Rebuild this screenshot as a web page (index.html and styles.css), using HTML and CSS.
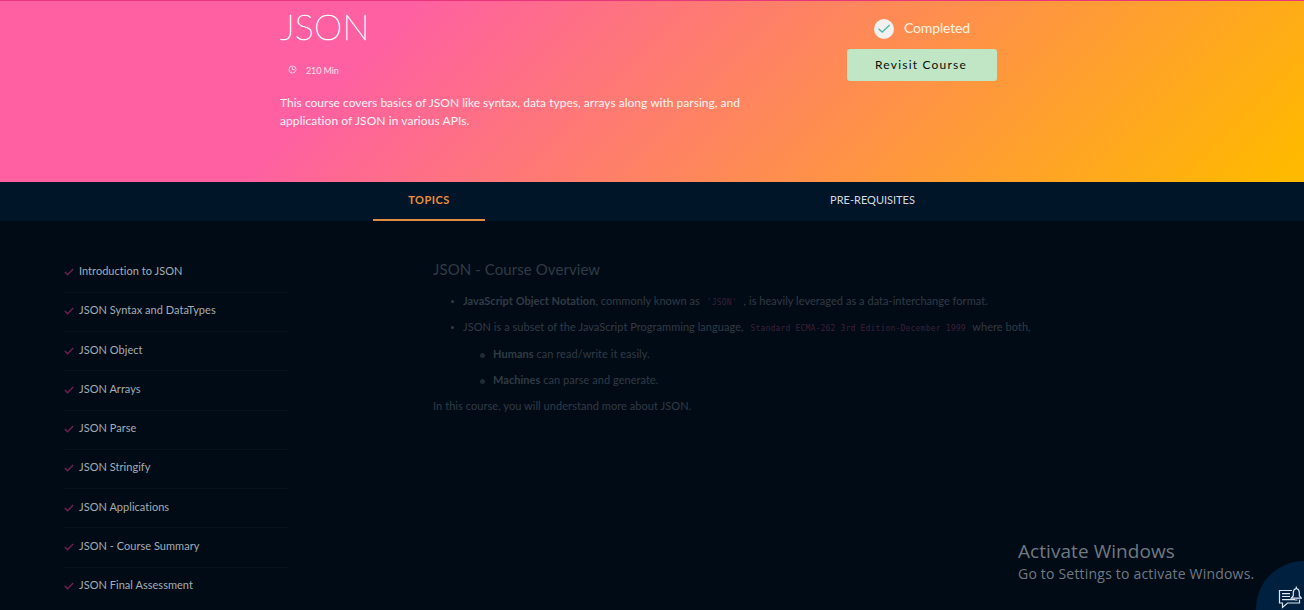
FILE: index.html
```html
<!DOCTYPE html>
<html lang="en">
<head>
<meta charset="utf-8">
<title>JSON</title>
<link rel="stylesheet" href="styles.css">
</head>
<body>
<header class="hero">
  <div class="intro">
    <h1 class="title">JSON</h1>
    <div class="duration">
      <svg class="clock" viewBox="0 0 9 9"><circle cx="4.5" cy="4.5" r="3.5"/><path d="M4.5 2.2v2.5h2.3"/></svg>
      <span>210 Min</span>
    </div>
    <p class="summary">This course covers basics of JSON like syntax, data types, arrays along with parsing, and<br><span class="line-two">application of JSON in various APIs.</span></p>
  </div>
  <div class="status">
    <div class="completed">
      <svg class="badge" viewBox="0 0 20 20"><circle cx="10" cy="10" r="10"/><path d="M4.5 9.7l3.7 3.4 7.5-7"/></svg>
      <span>Completed</span>
    </div>
    <button class="revisit">Revisit Course</button>
  </div>
</header>
<nav class="tabs">
  <a class="tab active"><span>TOPICS</span></a>
  <a class="tab prereq"><span>PRE-REQUISITES</span></a>
</nav>
<main class="content">
  <ul class="topics">
    <li><svg class="tick" viewBox="0 0 10 8"><path d="M.8 4l2.8 2.8L9.2 1"/></svg><span>Introduction to JSON</span></li>
    <li><svg class="tick" viewBox="0 0 10 8"><path d="M.8 4l2.8 2.8L9.2 1"/></svg><span>JSON Syntax and DataTypes</span></li>
    <li><svg class="tick" viewBox="0 0 10 8"><path d="M.8 4l2.8 2.8L9.2 1"/></svg><span>JSON Object</span></li>
    <li><svg class="tick" viewBox="0 0 10 8"><path d="M.8 4l2.8 2.8L9.2 1"/></svg><span>JSON Arrays</span></li>
    <li><svg class="tick" viewBox="0 0 10 8"><path d="M.8 4l2.8 2.8L9.2 1"/></svg><span>JSON Parse</span></li>
    <li><svg class="tick" viewBox="0 0 10 8"><path d="M.8 4l2.8 2.8L9.2 1"/></svg><span>JSON Stringify</span></li>
    <li><svg class="tick" viewBox="0 0 10 8"><path d="M.8 4l2.8 2.8L9.2 1"/></svg><span>JSON Applications</span></li>
    <li><svg class="tick" viewBox="0 0 10 8"><path d="M.8 4l2.8 2.8L9.2 1"/></svg><span>JSON - Course Summary</span></li>
    <li><svg class="tick" viewBox="0 0 10 8"><path d="M.8 4l2.8 2.8L9.2 1"/></svg><span>JSON Final Assessment</span></li>
  </ul>
  <article class="overview">
    <h2>JSON - Course Overview</h2>
    <ul class="points">
      <li><strong>JavaScript Object Notation</strong>, commonly known as <code>'JSON'</code> , is heavily leveraged as a data-interchange format.</li>
      <li>JSON is a subset of the JavaScript Programming language, <code>Standard ECMA-262 3rd Edition-December 1999</code> where both,
        <ul class="subpoints">
          <li><strong>Humans</strong> can read/write it easily.</li>
          <li><strong>Machines</strong> can parse and generate.</li>
        </ul>
      </li>
    </ul>
    <p class="closing">In this course, you will understand more about JSON.</p>
  </article>
</main>
<aside class="watermark">
  <div class="wm-title">Activate Windows</div>
  <div class="wm-text">Go to Settings to activate Windows.</div>
</aside>
<div class="chat">
  <svg class="chat-icon" viewBox="0 0 24 24"><path d="M14 5.500H1.500v12.500h3v4.500l5-4.500h12v-3.500"/><path d="M4 8.700h8M4 11.500h8M4 14.700h13"/><path d="M13.300 13.200h10l-2-2.500V7.500c0-2-1-3.500-3-4-2 .5-3 2-3 4v3.200zM18.300 3.500v-2M17 15h2.500"/></svg>
</div>
</body>
</html>
```
FILE: styles.css
```css
* { box-sizing: border-box; }
body {
  margin: 0;
  width: 1304px;
  height: 610px;
  overflow: hidden;
  background: #000b16;
  font-family: Lato, "Liberation Sans", sans-serif;
  font-size: 11px;
  color: #a3adb5;
}
h1, h2, p, ul { margin: 0; padding: 0; font-weight: 400; }
ul { list-style: none; }

.hero {
  height: 182px;
  display: flex;
  padding-left: 280px;
  border-top: 1px solid #e8357c;
  background: linear-gradient(135deg, #fe60a2 28%, #ffb900 98%);
  color: #fff;
}
.intro { width: 567px; }
.title {
  font-size: 36px;
  line-height: 44px;
  font-weight: 100;
  letter-spacing: .2px;
  padding-top: 3px;
  height: 61px;
  -webkit-text-stroke: .6px #fff;
}
.duration {
  display: flex;
  align-items: center;
  gap: 9px;
  height: 16px;
  padding-left: 8px;
  font-size: 9px;
  letter-spacing: -.1px;
  color: #ffe0ec;
}
.clock { width: 9px; height: 9px; margin-top: -1px; fill: none; stroke: #ffd0e2; stroke-width: 1; }
.summary { padding-top: 16px; font-size: 12px; line-height: 18px; letter-spacing: .015px; white-space: nowrap; color: #fff4f4; }
.line-two { letter-spacing: .07px; }

.status { width: 150px; padding-top: 17px; }
.completed {
  display: flex;
  align-items: center;
  gap: 10px;
  padding-left: 27px;
  height: 21px;
  font-size: 14px;
  letter-spacing: -.15px;
  color: #fff4e4;
}
.completed span { margin-top: -2px; }
.badge { width: 20px; height: 20px; }
.badge circle { fill: #f1f1ef; }
.badge path { fill: none; stroke: #4fb6a9; stroke-width: 1.3; }
.revisit {
  display: block;
  width: 150px;
  height: 32px;
  margin-top: 10px;
  padding: 0 2px 2px 0;
  border: 0;
  border-radius: 3px;
  background: #c0e6c5;
  color: #06100a;
  font: 12px Lato, sans-serif;
  letter-spacing: 1.2px;
}

.tabs {
  height: 39px;
  display: flex;
  justify-content: space-between;
  padding: 0 376px 0 373px;
  background: #001528;
}
.tab { height: 39px; line-height: 36px; text-align: center; color: #d3dae0; white-space: nowrap; }
.active { width: 112px; border-bottom: 2px solid #e08a42; color: #e98f3d; font-weight: 700; letter-spacing: .5px; }
.prereq { width: 111px; }

.content { display: flex; padding-left: 64px; }
.topics { width: 224px; padding-top: 32.500px; }
.topics li {
  display: flex;
  align-items: center;
  gap: 5px;
  height: 39.250px;
  padding-bottom: 4px;
  border-bottom: 1px solid #091119;
  letter-spacing: .03px;
}
.topics li:last-child { border-color: transparent; }
.tick { width: 10px; height: 8px; margin-top: 3px; fill: none; stroke: #6e204f; stroke-width: 1.5; }

.overview { padding: 37px 0 0 145px; color: #303b45; white-space: nowrap; }
.overview h2 { font-size: 15px; line-height: 22px; letter-spacing: .08px; }
.overview strong { font-weight: 700; letter-spacing: .03px; }
.overview code { margin: 0 4px; font: 8px "DejaVu Sans Mono", monospace; letter-spacing: .19px; color: #3b2039; }
.points { padding-top: 8px; line-height: 26.300px; letter-spacing: .04px; }
.points li::before {
  content: "";
  display: inline-block;
  width: 3px;
  height: 3px;
  margin: 0 9px 2px 18px;
  border-radius: 50%;
  background: #303b45;
}
.subpoints { padding-left: 29px; }
.points .subpoints li::before { width: 5px; height: 5px; margin: 0 8px 0 18px; background: #202b35; }
.closing { line-height: 26px; letter-spacing: .06px; }

.watermark {
  position: absolute;
  left: 1018px;
  top: 538px;
  font-family: "Open Sans", sans-serif;
  color: #707982;
  white-space: nowrap;
}
.wm-title { font-size: 19px; line-height: 26px; letter-spacing: .06px; }
.wm-text { font-size: 14px; line-height: 20px; letter-spacing: .2px; }
.chat {
  position: absolute;
  left: 1256px;
  top: 561px;
  width: 48px;
  height: 49px;
  border-top-left-radius: 48px;
  background: #002040;
  overflow: hidden;
}
.chat-icon { display: block; width: 24px; height: 24px; margin: 24px 0 0 22px; fill: none; stroke: #dce6ee; stroke-width: 1.2; }
```
